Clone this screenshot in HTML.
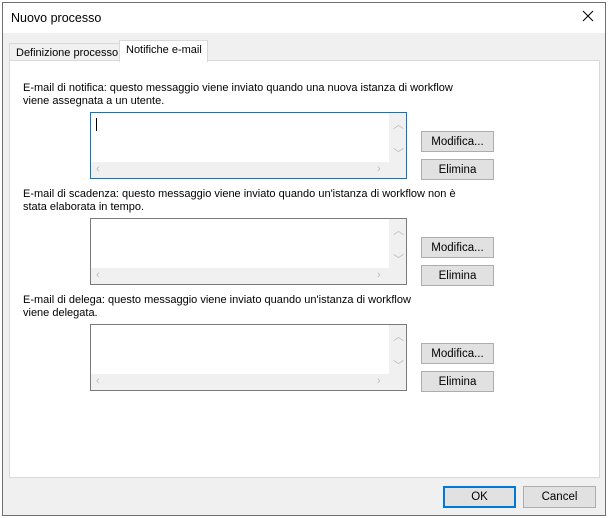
<!DOCTYPE html>
<html><head><style>
*{box-sizing:border-box;margin:0;padding:0}
body{width:609px;height:518px;background:#fff;font-family:"Liberation Sans",sans-serif;font-size:11px;color:#000;position:relative;overflow:hidden}
.a{position:absolute;white-space:nowrap}
.win{left:2px;top:2px;width:604px;height:514px;border:1px solid #707070;background:#f0f0f0}
.title{left:3px;top:3px;width:602px;height:30px;background:#fff}
.panel{left:9px;top:60px;width:591px;height:418px;background:#fff;border:1px solid #d9d9d9}
.tab{height:18px;border:1px solid #d9d9d9;border-bottom:none;background:#f0f0f0;padding:3px 6px 0}
.ta{width:317px;height:67px;border:1px solid #7a7a7a;background:#fff}
.vs{right:0;top:0;width:17px;height:49px;background:#f0f0f0}
.hs{left:0;bottom:0;width:315px;height:16px;background:#f0f0f0}
.btn{width:73px;height:21px;border:1px solid #adadad;background:#e1e1e1;text-align:center;line-height:21px;font-size:11.5px}
.ar{color:#bbb;font-size:11px}
</style></head><body>
<div class="a win"></div>
<div class="a title"></div>
<div class="a" style="left:11px;top:11px;font-size:12.5px">Nuovo processo</div>
<svg class="a" style="left:582px;top:10px" width="12" height="12"><path d="M1 1L11 11M11 1L1 11" stroke="#000" stroke-width="1"/></svg>
<div class="a tab" style="left:9px;top:43px;width:111px;padding-top:3px">Definizione processo</div>
<div class="a panel"></div>
<div class="a tab" style="left:119px;top:40px;width:89px;height:22px;background:#fff;padding-top:3px">Notifiche e-mail</div>

<div class="a" style="left:23px;top:82px;line-height:13px">E-mail di notifica: questo messaggio viene inviato quando una nuova istanza di workflow<br>viene assegnata a un utente.</div>
<div class="a ta" style="left:90px;top:112px;border-color:#0078d7"><div class="a vs"><span class="a ar" style="left:4px;top:3px">︿</span><span class="a ar" style="left:4px;top:32px">﹀</span></div><div class="a hs"><span class="a ar" style="left:5px;top:1px">‹</span><span class="a ar" style="left:286px;top:1px">›</span></div><div class="a" style="left:5px;top:5px;width:1px;height:13px;background:#000"></div></div>
<div class="a btn" style="left:421px;top:131px">Modifica...</div>
<div class="a btn" style="left:421px;top:159px">Elimina</div>

<div class="a" style="left:23px;top:188px;line-height:13px">E-mail di scadenza: questo messaggio viene inviato quando un'istanza di workflow non è<br>stata elaborata in tempo.</div>
<div class="a ta" style="left:90px;top:218px"><div class="a vs"><span class="a ar" style="left:4px;top:3px">︿</span><span class="a ar" style="left:4px;top:32px">﹀</span></div><div class="a hs"><span class="a ar" style="left:5px;top:1px">‹</span><span class="a ar" style="left:286px;top:1px">›</span></div></div>
<div class="a btn" style="left:421px;top:237px">Modifica...</div>
<div class="a btn" style="left:421px;top:265px">Elimina</div>

<div class="a" style="left:23px;top:294px;line-height:13px">E-mail di delega: questo messaggio viene inviato quando un'istanza di workflow<br>viene delegata.</div>
<div class="a ta" style="left:90px;top:324px"><div class="a vs"><span class="a ar" style="left:4px;top:3px">︿</span><span class="a ar" style="left:4px;top:32px">﹀</span></div><div class="a hs"><span class="a ar" style="left:5px;top:1px">‹</span><span class="a ar" style="left:286px;top:1px">›</span></div></div>
<div class="a btn" style="left:421px;top:343px">Modifica...</div>
<div class="a btn" style="left:421px;top:371px">Elimina</div>

<div class="a btn" style="left:443px;top:486px;height:22px;border:2px solid #0078d7;line-height:18px">OK</div>
<div class="a btn" style="left:523px;top:486px;height:22px;line-height:20px">Cancel</div>
</body></html>
